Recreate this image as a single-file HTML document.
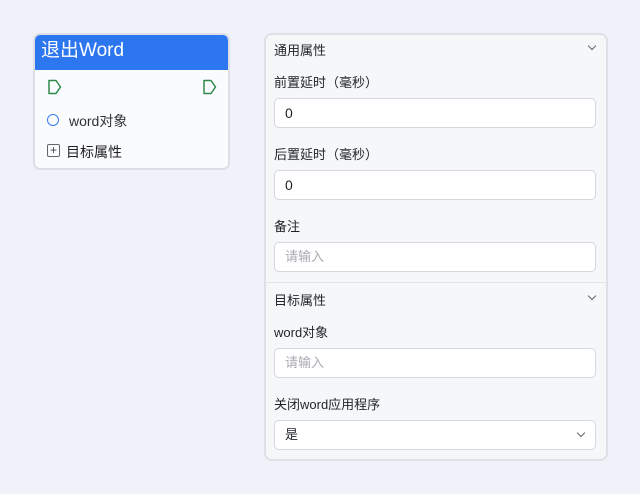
<!DOCTYPE html>
<html><head><meta charset="utf-8"><style>
*{box-sizing:border-box;margin:0;padding:0}
body{width:640px;height:494px;background:#eff2f9;font-family:"Liberation Sans","Noto Sans CJK SC",sans-serif;position:relative;overflow:hidden;color:#1f2329}
.node{position:absolute;left:33px;top:33px;width:197px;height:137px;border:2px solid #dcdfe6;border-radius:7px;background:#f9fbff;overflow:hidden}
.nh{height:35px;background:#2c76f0;color:#fff;font-size:19px;line-height:32px;padding-left:6px}
.panel{position:absolute;left:264px;top:33px;width:344px;height:428px;border:2px solid #dde0e6;border-radius:8px;background:#f6f7f9}
.t{position:absolute;font-size:13px;color:#1f2329}
.in{position:absolute;left:8px;width:322px;height:30px;border:1px solid #d4d7de;border-radius:5px;background:#fff;font-size:14px;padding-left:10px;line-height:28px}
.ph{color:#a8abb2;font-size:13px}
.chev{position:absolute;right:11px;width:6px;height:6px;border-right:1.3px solid #666;border-bottom:1.3px solid #666;transform:rotate(45deg)}
</style></head><body>
<div class="node">
<div class="nh">退出Word</div>
<svg style="position:absolute;left:13px;top:44px" width="14" height="16"><path d="M1 1.5h7l4.5 6.5-4.5 6.5h-7z" fill="none" stroke="#2f8a4a" stroke-width="1.5" stroke-linejoin="round"/></svg>
<svg style="position:absolute;left:168px;top:44px" width="14" height="16"><path d="M1 1.5h7l4.5 6.5-4.5 6.5h-7z" fill="none" stroke="#2f8a4a" stroke-width="1.5" stroke-linejoin="round"/></svg>
<div style="position:absolute;left:12px;top:79px;width:12px;height:12px;border:1.5px solid #3a7bf0;border-radius:50%"></div>
<div style="position:absolute;left:34px;top:76px;font-size:14px;color:#333">word对象</div>
<div style="position:absolute;left:12px;top:109px;width:13px;height:13px;border:1.3px solid #666;border-radius:2px;font-size:12px;line-height:10px;text-align:center;color:#444">+</div>
<div style="position:absolute;left:31px;top:107px;font-size:14px;color:#222">目标属性</div>
</div>
<div class="panel">
<div class="t" style="left:8px;top:5px">通用属性</div><div class="chev" style="top:8px"></div>
<div class="t" style="left:8px;top:37px">前置延时（毫秒）</div>
<div class="in" style="top:63px">0</div>
<div class="t" style="left:8px;top:109px">后置延时（毫秒）</div>
<div class="in" style="top:135px">0</div>
<div class="t" style="left:8px;top:181px">备注</div>
<div class="in ph" style="top:207px">请输入</div>
<div style="position:absolute;left:0;right:0;top:247px;border-top:1px solid #e3e5ea"></div>
<div class="t" style="left:8px;top:255px">目标属性</div><div class="chev" style="top:258px"></div>
<div class="t" style="left:8px;top:287px">word对象</div>
<div class="in ph" style="top:313px">请输入</div>
<div class="t" style="left:8px;top:359px">关闭word应用程序</div>
<div class="in" style="top:385px;font-size:13px">是<div class="chev" style="top:9px"></div></div>
</div>
</body></html>
